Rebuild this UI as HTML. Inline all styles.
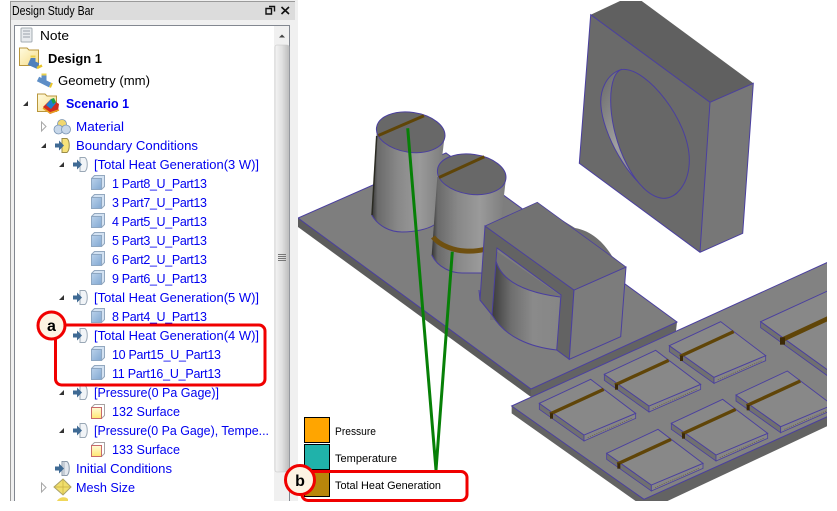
<!DOCTYPE html>
<html><head><meta charset="utf-8"><style>
html,body{margin:0;padding:0;background:#fff}
svg{display:block}
text{font-family:"Liberation Sans",sans-serif;font-size:13px;fill:#0000f0}
.k{fill:#000}
.l{font-size:11px;fill:#000}
.p{font-size:12.500px}
</style></head><body>
<svg width="837" height="511" viewBox="0 0 837 511" xmlns="http://www.w3.org/2000/svg">
<defs>
<clipPath id="c3"><rect x="298" y="0" width="529" height="501"/></clipPath>
<clipPath id="cp"><rect x="0" y="0" width="298" height="501"/></clipPath>
<linearGradient id="cy" x1="0" x2="1" y1="0" y2="0"><stop offset="0" stop-color="#333"/><stop offset=".08" stop-color="#6a6a6a"/><stop offset=".35" stop-color="#888"/><stop offset=".65" stop-color="#9a9a9a"/><stop offset="1" stop-color="#7c7c7c"/></linearGradient>
<linearGradient id="cy2" x1="0" x2="1" y1="0" y2="0"><stop offset="0" stop-color="#3c3c3c"/><stop offset=".28" stop-color="#6e6e6e"/><stop offset=".6" stop-color="#8a8a8a"/><stop offset="1" stop-color="#868686"/></linearGradient>
<linearGradient id="cr" x1="0" x2="1" y1="0" y2="1"><stop offset="0" stop-color="#666"/><stop offset=".4" stop-color="#a0a0a0"/><stop offset=".75" stop-color="#848484"/><stop offset="1" stop-color="#333"/></linearGradient>
<linearGradient id="th" x1="0" x2="1" y1="0" y2="0"><stop offset="0" stop-color="#f4f4f4"/><stop offset=".5" stop-color="#e0e0e0"/><stop offset="1" stop-color="#bdbdbd"/></linearGradient>
<linearGradient id="cube" x1="0" x2="1" y1="0" y2="1"><stop offset="0" stop-color="#b9d1ea"/><stop offset="1" stop-color="#82a8d2"/></linearGradient>
<linearGradient id="sf" x1="0" x2="0" y1="0" y2="1"><stop offset="0" stop-color="#fffbd8"/><stop offset="1" stop-color="#ffe672"/></linearGradient>
<linearGradient id="fd" x1="0" x2="1" y1="0" y2="1"><stop offset="0" stop-color="#fffbe0"/><stop offset="1" stop-color="#f6dc88"/></linearGradient>

<g id="cubeI"><path d="M.5 3.500 3.500 .5H13.500V11.500L10.500 14.500H.5Z" fill="#d3e2f2" stroke="#93a8bf"/><rect x=".5" y="3.500" width="10" height="11" fill="url(#cube)" stroke="#8ea7c2"/></g>
<g id="surfI"><path d="M.5 3.500 3.500 .5H13.500V11.500L10.500 14.500H.5Z" fill="#fff" stroke="#a8a2a2"/><rect x=".5" y="3.500" width="10" height="11" fill="url(#sf)" stroke="#c86a6a"/></g>
<g id="bcI"><path d="M7 .5H12C15 3 15 12 12 14.500H7Z" fill="#f1f4f7" stroke="#9aa8b6"/><path d="M0 5.500H4V2.500L9 7.500 4 12.500V9.500H0Z" fill="#3f6a94"/></g>
<g id="bcY"><path d="M7 .5H12C15 3 15 12 12 14.500H7Z" fill="#f7e27a" stroke="#9a8c4a"/><path d="M0 5.500H4V2.500L9 7.500 4 12.500V9.500H0Z" fill="#3f6a94"/></g>
<path id="ar" d="M0 5 5 0V5Z" fill="#333"/>
<path id="tri" d="M.5 0 5 4.500.5 9Z" fill="#fff" stroke="#a8a8a8"/>

<g id="pl">
<path d="M0 0V18L134 113V95Z" fill="#707070" stroke="#4a3f9f" stroke-width="2.500"/>
<path d="M134 95V113L289 45V30Z" fill="#868686" stroke="#4a3f9f" stroke-width="2.500"/>
<path d="M0 0 154 -72 289 30 134 95Z" fill="#888" stroke="#4a3f9f" stroke-width="2.800"/>
<path d="M32 32 193 -42" stroke="#604508" stroke-width="10" fill="none"/>
<rect x="32" y="30" width="9" height="16" fill="#3d2a08"/>
<path d="M145 103 280 44" stroke="#6a6040" stroke-width="2" stroke-dasharray="4 3" fill="none"/>
</g>
</defs>

<!-- 3D scene -->
<g clip-path="url(#c3)">
<!-- block with hole -->
<path d="M590.700 14.700 620 1H641.700L753.300 83.300 710 102.300Z" fill="#606060"/>
<path d="M710 102.300 753.300 83.300 742.700 233.300 700 252.300Z" fill="#777"/>
<path d="M590.700 14.700 710 102.300 700 252.300 579.300 163.300Z" fill="#6a6a6a"/>
<path d="M579.300 163.300 590.700 14.700 710 102.300 753.300 83.300 742.700 233.300 700 252.300ZM710 102.300 700 252.300" fill="none" stroke="#4a3f9f" stroke-width="1"/>
<g transform="translate(560 0) scale(.33333)">
<path d="M185 208C140 222 118 270 123 320 130 400 200 540 290 590 310 598 335 592 350 580Z" fill="url(#cr)" stroke="#4a3f9f" stroke-width="3"/>
<path d="M190 208C260 205 388 360 388 480 388 550 350 595 310 595 230 590 152 430 152 300 152 250 165 208 190 208Z" fill="#676767" stroke="#4a3f9f" stroke-width="3"/>
</g>

<!-- base plate -->
<path d="M298 218V227L531 397V389Z" fill="#5c5c5c"/>
<path d="M531 389V397L676 331 677 322Z" fill="#636363"/>
<path d="M298 218 446 153 677 322 531 389Z" fill="#7e7e7e" stroke="#4a3f9f" stroke-width="1"/>

<!-- lump behind U block -->
<path d="M552 214 575 228C592 231 604 243 612 256L626 267 537 202Z" fill="#6e6e6e"/>

<!-- cylinder 1 -->
<path d="M376.700 133 371.700 215C378 226 390 232 402 232 415 232 428 229 434 225L445 133Z" fill="url(#cy)"/>
<path d="M371.700 215C378 226 390 232 402 232 415 232 428 229 434 225" fill="none" stroke="#4a3f9f"/>
<path d="M376.700 136 372 215" stroke="#2a2a22" stroke-width="1.500" fill="none"/>
<ellipse cx="410.700" cy="132.300" rx="34.500" ry="20" transform="rotate(8 410.700 132.300)" fill="#686868" stroke="#4a3f9f"/>
<path d="M378.300 135.500 424 115.700" stroke="#5f4508" stroke-width="3"/>

<!-- cylinder 2 -->
<path d="M437.300 177 431.700 255C438 268 452 273 462 273H495L506 178Z" fill="url(#cy)"/>
<path d="M431.700 255C438 268 452 273 462 273H490" fill="none" stroke="#4a3f9f"/>
<path d="M433 237C440 246 455 250.500 465 251 475 251.500 480 250.500 484 249.500" fill="none" stroke="#6f5010" stroke-width="5"/>
<ellipse cx="471.700" cy="174.300" rx="34.500" ry="20" transform="rotate(8 471.700 174.300)" fill="#686868" stroke="#4a3f9f"/>
<path d="M439 177.500 484.300 156.700" stroke="#5f4508" stroke-width="3"/>

<!-- U block -->
<path d="M495 250 561 296 560 320H490Z" fill="#747474"/>
<path d="M495 255C498 275 515 291 560 297L556.700 350C530 347 505 337 492 315Z" fill="url(#cy2)"/>
<path d="M495 257C498 275 515 291 560 297M556.700 350C530 347 505 337 492 315" fill="none" stroke="#4a3f9f"/>
<path d="M485 226 574 290 569.300 359.300 556.700 350 561 295 497 248 492 315 480 300Z" fill="#636363" stroke="#4a3f9f"/>
<path d="M574 290 626 267 620.700 336.700 569.300 359.300Z" fill="#7c7c7c" stroke="#4a3f9f"/>
<path d="M485 226 537.300 202.300 626 267 574 290Z" fill="#727272" stroke="#4a3f9f" stroke-width=".8"/>
<path d="M479 290 480 300 492 315" fill="none" stroke="#4a3f9f"/>

<!-- PCB plate with small plates -->
<g transform="translate(500 290) scale(.33333)">
<path d="M35 348V370L445 660 1000 400V370L432 628Z" fill="#636363"/>
<path d="M35 348 1000 -91V372L432 628Z" fill="#828282" stroke="#4a3f9f" stroke-width="3"/>
<path d="M782 95V113L1000 270V252Z" fill="#707070" stroke="#4a3f9f" stroke-width="2.500"/>
<path d="M782 95 1000 -5V252Z" fill="#888" stroke="#4a3f9f" stroke-width="2.800"/>
<path d="M845 150 1000 78" stroke="#604508" stroke-width="14" fill="none"/>
<rect x="840" y="142" width="15" height="22" fill="#3d2a08"/>
<use href="#pl" x="118" y="340"/>
<use href="#pl" x="313" y="253"/>
<use href="#pl" x="508" y="167"/>
<use href="#pl" x="320" y="490"/>
<use href="#pl" x="514" y="400"/>
<use href="#pl" x="708" y="315"/>
</g>

<!-- green leaders -->
<path d="M407.700 128.300 436 470 452.300 251.700" fill="none" stroke="#078007" stroke-width="3"/>
</g>

<!-- legend -->
<rect x="304.500" y="417.500" width="25" height="25" fill="#ffa500" stroke="#000"/>
<rect x="304.500" y="444.500" width="25" height="25" fill="#20b2aa" stroke="#000"/>
<rect x="304.500" y="471.500" width="25" height="25" fill="#b8860b" stroke="#000"/>
<text class="l" x="335" y="435" textLength="41" lengthAdjust="spacingAndGlyphs">Pressure</text>
<text class="l" x="335" y="462" textLength="62" lengthAdjust="spacingAndGlyphs">Temperature</text>
<text class="l" x="335" y="489" textLength="106" lengthAdjust="spacingAndGlyphs">Total Heat Generation</text>
<rect x="302" y="471.500" width="165" height="29" rx="6" fill="none" stroke="#f00000" stroke-width="3"/>

<!-- left panel -->
<g clip-path="url(#cp)">
<rect x="10" y="0" width="288" height="501" fill="#f0f0f0"/>
<rect x="10" y="1" width="285" height="19" fill="#dcdcdc"/>
<path d="M10.500 1V501M10 1.500H295" stroke="#9a9a9a" fill="none"/>
<rect x="14.500" y="25.500" width="275" height="480" fill="#fff" stroke="#828790"/>
<rect x="274" y="26" width="15" height="480" fill="#f0f0f0"/>
<path d="M279 37.500 282 34.500 285 37.500Z" fill="#444"/>
<rect x="275" y="45" width="14" height="427" rx="2" fill="url(#th)" stroke="#c4c4c4" stroke-width=".6"/>
<path d="M278 254.500H286M278 256.500H286M278 258.500H286M278 260.500H286" stroke="#777"/>
</g>
<text class="k" x="12" y="15" textLength="82" lengthAdjust="spacingAndGlyphs" style="font-size:12.500px">Design Study Bar</text>
<path d="M269 6.500H274.500V11.500M266 8.500H271.500V14H266Z" fill="none" stroke="#111" stroke-width="1.400"/>
<path d="M281.500 7 289 14M289 7 281.500 14" stroke="#111" stroke-width="1.600"/>

<!-- tree icons -->
<rect x="21" y="28" width="11" height="14" rx="1" fill="#e8ebee" stroke="#a5acb3"/>
<path d="M23 31H30M23 34H30M23 37H30" stroke="#9aa2aa"/>
<path d="M19.500 65.500V48H27L29 50H38.500V65.500Z" fill="url(#fd)" stroke="#b8963c"/>
<path d="M29 62 38 66" stroke="#4f80bc" stroke-width="6"/>
<path d="M33 58V63" stroke="#4f80bc" stroke-width="5"/>
<path d="M30.500 56.500H35.500" stroke="#e8cf4c" stroke-width="2"/>
<path d="M37 68 42 65.500" stroke="#e8c52a" stroke-width="2.500"/>

<path d="M38 79 50 85" stroke="#5e8ec6" stroke-width="5"/>
<path d="M44 75V81" stroke="#5e8ec6" stroke-width="5"/>
<path d="M41.500 74.500H46.500" stroke="#e8cf4c" stroke-width="2"/>
<path d="M50 87.500 52 83" stroke="#e8c52a" stroke-width="2"/>
<use href="#ar" x="23" y="101"/>
<path d="M37.500 111.500V94H45L47 96H56.500V111.500Z" fill="url(#fd)" stroke="#b8963c"/>
<path d="M43 107 51 99 59 104 58 111 50 114Z" fill="#d02c20"/>
<path d="M46 105 51 99 56 103 51 109Z" fill="#1d7fd0"/>
<path d="M51 99 54 98 56 102 53 104Z" fill="#20a040"/>
<path d="M43 108 50 113 59 110" stroke="#e8a020" stroke-width="1.500" fill="none"/>

<use href="#tri" x="41" y="122"/>
<g fill="#c8d8ea" stroke="#7a95b4" stroke-width=".8"><circle cx="62" cy="124" r="4.500" fill="#f0d770"/><circle cx="58.500" cy="129.500" r="4.500"/><circle cx="66" cy="129.500" r="4.500"/></g>
<use href="#ar" x="41" y="143"/>
<use href="#bcY" x="55" y="138"/>
<use href="#ar" x="59" y="162"/>
<use href="#bcI" x="73" y="157"/>
<use href="#cubeI" x="91" y="175"/>
<use href="#cubeI" x="91" y="194"/>
<use href="#cubeI" x="91" y="213"/>
<use href="#cubeI" x="91" y="232"/>
<use href="#cubeI" x="91" y="251"/>
<use href="#cubeI" x="91" y="270"/>
<use href="#ar" x="59" y="295"/>
<use href="#bcI" x="73" y="290"/>
<use href="#cubeI" x="91" y="308"/>
<use href="#bcI" x="73" y="328"/>
<use href="#cubeI" x="91" y="346"/>
<use href="#cubeI" x="91" y="365"/>
<use href="#ar" x="59" y="390"/>
<use href="#bcI" x="73" y="385"/>
<use href="#surfI" x="91" y="404"/>
<use href="#ar" x="59" y="428"/>
<use href="#bcI" x="73" y="423"/>
<use href="#surfI" x="91" y="442"/>
<g transform="translate(55 461)"><path d="M7 .5H12C15 3 15 12 12 14.500H7Z" fill="#e4e8ee" stroke="#8a98a8"/><path d="M9 .5V14.500" stroke="#a8b2bc"/><path d="M0 5.500H4V2.500L9 7.500 4 12.500V9.500H0Z" fill="#3f6a94"/></g>
<use href="#tri" x="41" y="483"/>
<path d="M54 487 63 479 71 487 63 495Z" fill="#f0de6c" stroke="#a8a068"/>
<path d="M54 487H71M63 479V495" stroke="#c8b040" stroke-width=".7"/>
<path d="M57 501C59 497 65 496 68 499V501Z" fill="#f0d75a"/>

<!-- tree text -->
<text class="k" x="40" y="40" textLength="29" lengthAdjust="spacingAndGlyphs">Note</text>
<text class="k" x="48" y="63" textLength="54" lengthAdjust="spacingAndGlyphs" font-weight="bold">Design 1</text>
<text class="k" x="58" y="85" textLength="92" lengthAdjust="spacingAndGlyphs">Geometry (mm)</text>
<text x="66" y="108" textLength="63" lengthAdjust="spacingAndGlyphs" font-weight="bold">Scenario 1</text>
<text x="76" y="131" textLength="48" lengthAdjust="spacingAndGlyphs">Material</text>
<text x="76" y="150" textLength="122" lengthAdjust="spacingAndGlyphs">Boundary Conditions</text>
<text x="94" y="169" textLength="165" lengthAdjust="spacingAndGlyphs">[Total Heat Generation(3 W)]</text>
<text class="p" x="112" y="188" textLength="95">1 Part8_U_Part13</text>
<text class="p" x="112" y="207" textLength="95">3 Part7_U_Part13</text>
<text class="p" x="112" y="226" textLength="95">4 Part5_U_Part13</text>
<text class="p" x="112" y="245" textLength="95">5 Part3_U_Part13</text>
<text class="p" x="112" y="264" textLength="95">6 Part2_U_Part13</text>
<text class="p" x="112" y="283" textLength="95">9 Part6_U_Part13</text>
<text x="94" y="302" textLength="165" lengthAdjust="spacingAndGlyphs">[Total Heat Generation(5 W)]</text>
<text class="p" x="112" y="321" textLength="95">8 Part4_U_Part13</text>
<text x="94" y="340" textLength="165" lengthAdjust="spacingAndGlyphs">[Total Heat Generation(4 W)]</text>
<text class="p" x="112" y="359" textLength="109">10 Part15_U_Part13</text>
<text class="p" x="112" y="378" textLength="109">11 Part16_U_Part13</text>
<text x="94" y="397" textLength="125" lengthAdjust="spacingAndGlyphs">[Pressure(0 Pa Gage)]</text>
<text x="112" y="416" textLength="68" lengthAdjust="spacingAndGlyphs">132 Surface</text>
<text x="94" y="435" textLength="175" lengthAdjust="spacingAndGlyphs">[Pressure(0 Pa Gage), Tempe...</text>
<text x="112" y="454" textLength="68" lengthAdjust="spacingAndGlyphs">133 Surface</text>
<text x="76" y="473" textLength="96" lengthAdjust="spacingAndGlyphs">Initial Conditions</text>
<text x="76" y="492" textLength="59" lengthAdjust="spacingAndGlyphs">Mesh Size</text>

<!-- callouts -->
<rect x="55.500" y="325" width="209.500" height="60" rx="6" fill="none" stroke="#f00000" stroke-width="3"/>
<circle cx="51.500" cy="325.500" r="13.500" fill="#fdf3e3" stroke="#f00000" stroke-width="3"/>
<text class="k" x="51.500" y="331" text-anchor="middle" style="font-size:16px;font-weight:bold">a</text>
<circle cx="300" cy="480" r="14.500" fill="#fdf3e3" stroke="#f00000" stroke-width="3"/>
<text class="k" x="300" y="486" text-anchor="middle" style="font-size:16px;font-weight:bold">b</text>
</svg>
</body></html>
